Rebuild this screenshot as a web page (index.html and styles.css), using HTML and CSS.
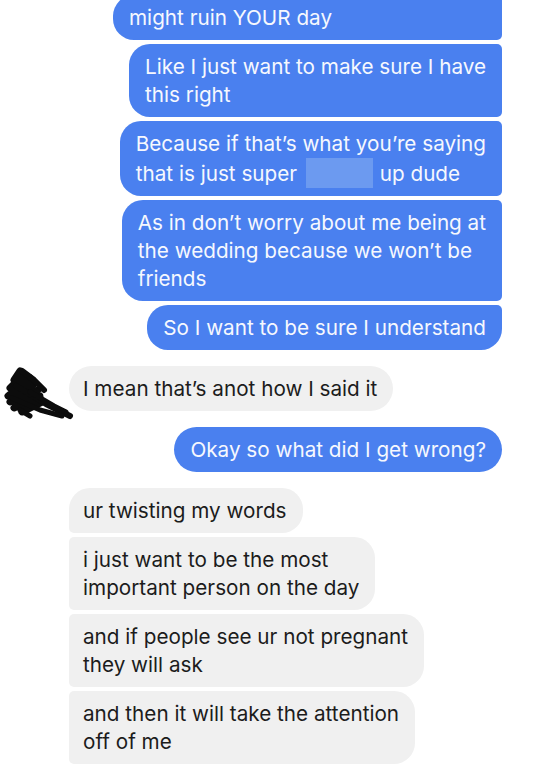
FILE: index.html
```html
<!DOCTYPE html>
<html>
<head>
<title>Messages</title>
<meta charset="utf-8">
<link rel="stylesheet" href="styles.css">
</head>
<body>

<div class="thread">

 <div class="group out">
  <div class="bubble wide">might ruin YOUR day</div>
  <div class="bubble">Like I just want to make sure I have<br>this right</div>
  <div class="bubble">Because if that’s what you’re saying<br>that is just super <span class="blank"></span> up dude</div>
  <div class="bubble">As in don’t worry about me being at<br>the wedding because we won’t be<br>friends</div>
  <div class="bubble last">So I want to be sure I understand</div>
 </div>

 <div class="row in">
  <svg class="avatar" width="69" height="45" viewBox="0 0 69 45">
   <g fill="none" stroke="#0c0c0c" stroke-linecap="round" stroke-linejoin="round">
    <path d="M20 5 L14 14 L24 8 L10 22 L30 12 L8 30 L34 18 L10 36 L38 24 L14 42 L40 30 L22 46 L42 36" stroke-width="7"/>
    <path d="M22 5 L34 14 L44 24" stroke-width="6"/>
    <path d="M16 20 L46 38 L70 50" stroke-width="6"/>
    <path d="M12 32 L40 44 L62 50" stroke-width="5"/>
    <path d="M30 26 L54 40 L66 46" stroke-width="5"/>
    <path d="M20 44 L30 50" stroke-width="5"/>
   </g>
  </svg>
  <div class="bubble">I mean that’s anot how I said it</div>
 </div>

 <div class="group out">
  <div class="bubble single">Okay so what did I get wrong?</div>
 </div>

 <div class="group in">
  <div class="bubble first">ur twisting my words</div>
  <div class="bubble">i just want to be the most<br>important person on the day</div>
  <div class="bubble">and if people see ur not pregnant<br>they will ask</div>
  <div class="bubble">and then it will take the attention<br>off of me</div>
  <div class="bubble">&nbsp;</div>
 </div>

</div>

</body>
</html>
```

FILE: styles.css
```css
body {
 margin: 0;
 background: #fff;
 font-family: Inter, "Liberation Sans", sans-serif;
 font-size: 20.7px;
 overflow: hidden;
}
.thread {
 display: flex;
 flex-direction: column;
 gap: 16px;
 margin-top: -5px;
}
.group {
 display: flex;
 flex-direction: column;
 gap: 4px;
}
.bubble {
 line-height: 28px;
 padding: 8.5px 16px;
 white-space: nowrap;
}

/* outgoing, blue */
.out {
 align-items: flex-end;
 padding-right: 31px;
}
.out .bubble {
 background-color: #4a80ef;
 color: #f6f8fe;
 border-radius: 21px 5px 5px 21px;
}
.out .bubble.wide {
 width: 357px;
}
.out .bubble.last {
 border-radius: 21px 5px 21px 21px;
}
.out .bubble.single {
 border-radius: 23px;
}
.blank {
 display: inline-block;
 width: 67px;
 height: 30px;
 margin: 0 1px 0 3px;
 vertical-align: -7px;
 background-color: #6c9af0;
}

/* incoming, grey */
.in {
 align-items: flex-start;
}
.in .bubble {
 background-color: #f0f0f0;
 color: #1c1c1c;
 padding-left: 14px;
 border-radius: 5px 21px 21px 5px;
}
.group.in {
 padding-left: 69px;
}
.in .bubble.first {
 border-radius: 21px 21px 21px 5px;
}
.row.in {
 display: flex;
 align-items: flex-start;
}
.row.in .bubble {
 border-radius: 23px;
}
.avatar {
 display: block;
 flex: none;
 overflow: visible;
}
```
